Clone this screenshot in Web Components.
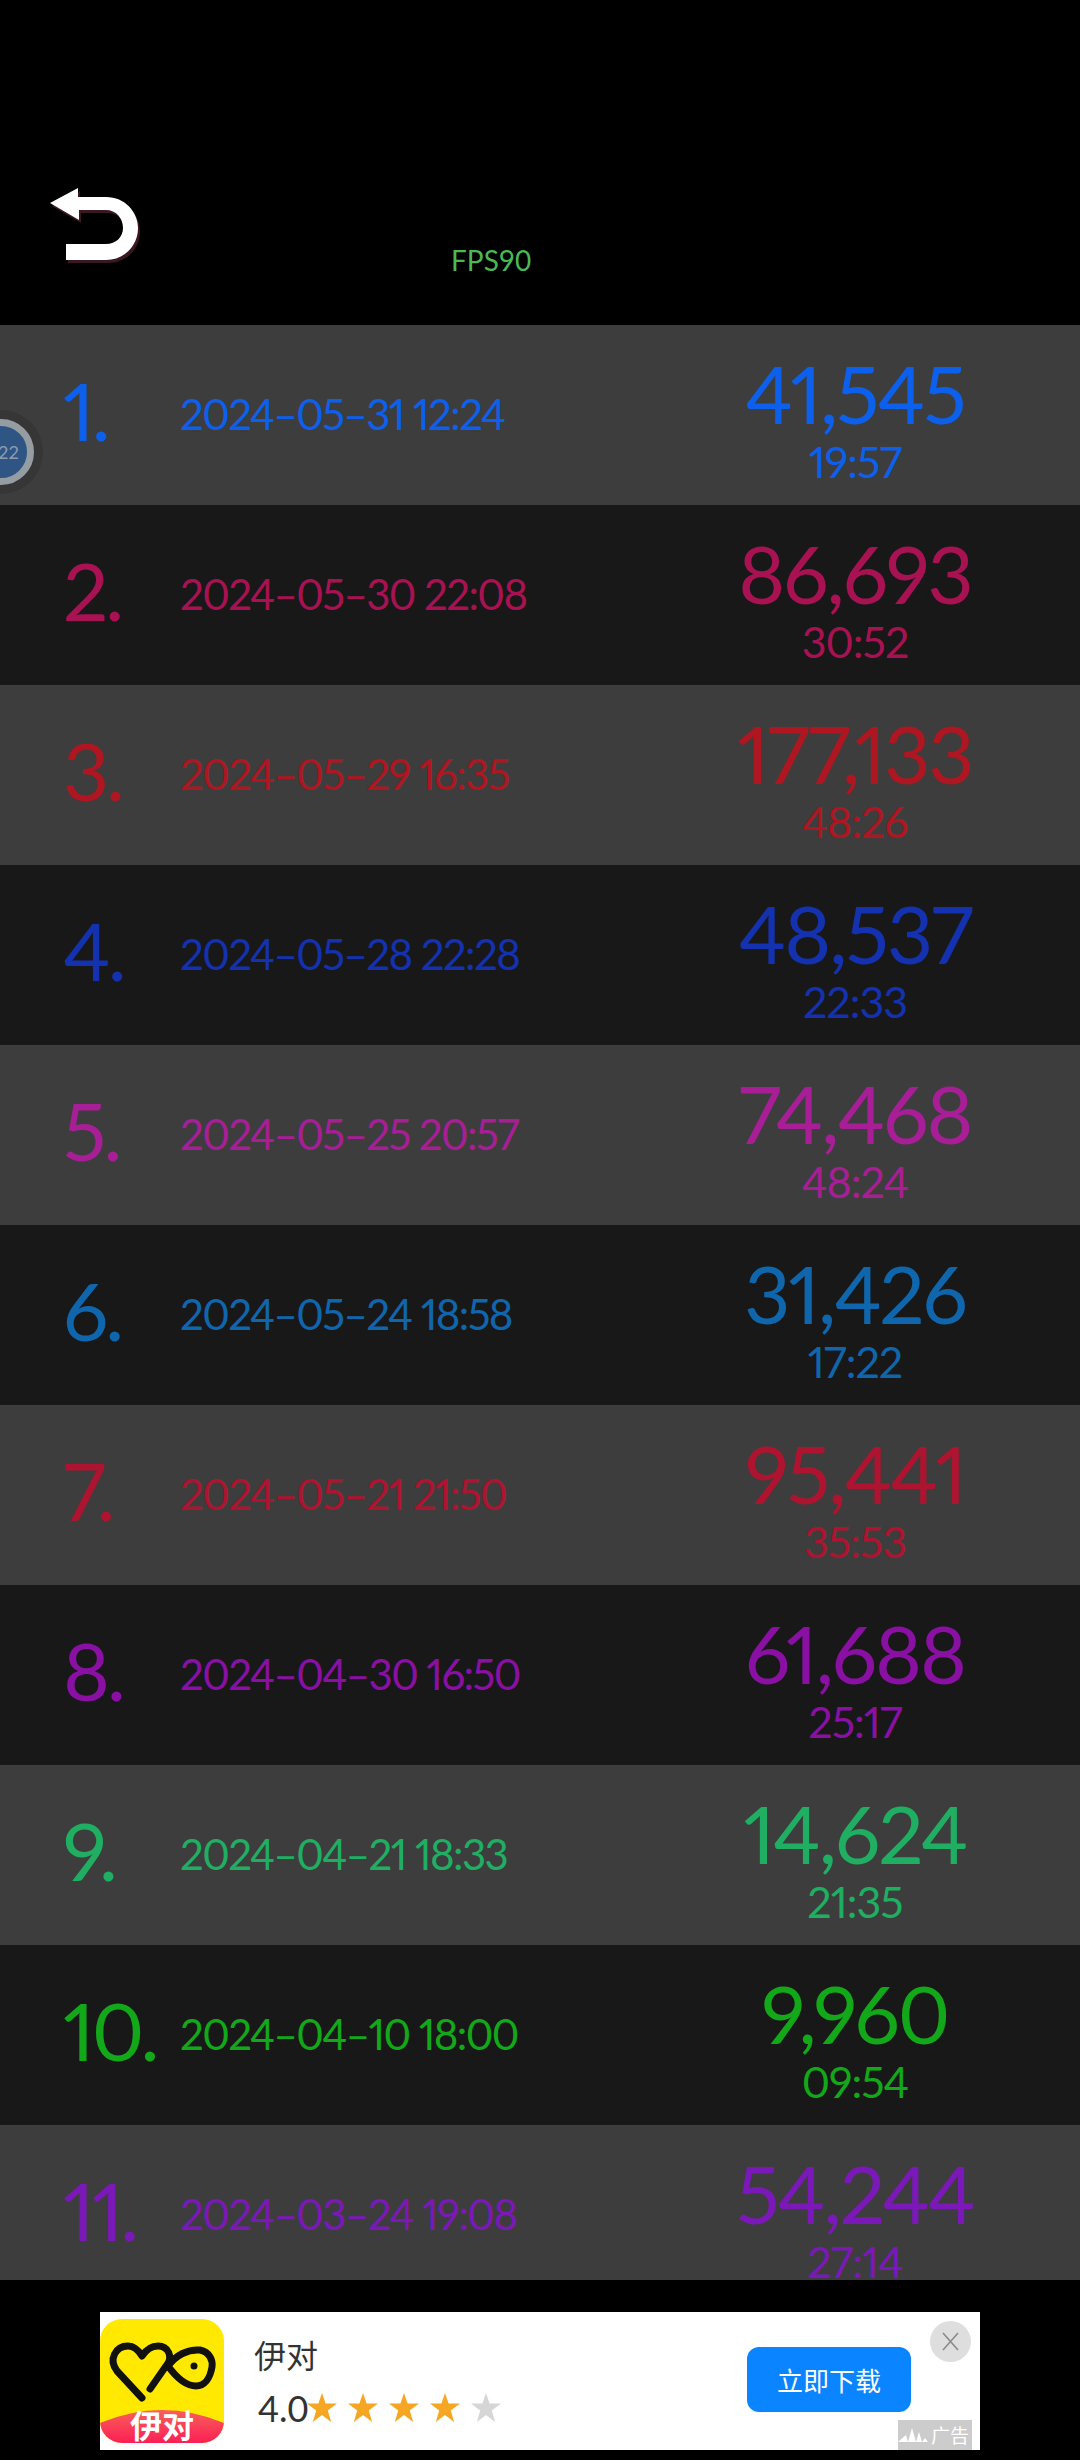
<!DOCTYPE html>
<html>
<head>
<meta charset="utf-8">
<style>
html, body { margin: 0; padding: 0; background: #000; }
body { width: 1080px; height: 2460px; overflow: hidden; font-family: "Lato", "Noto Sans CJK SC", sans-serif; }
</style>
</head>
<body>
<score-app>
  <top-bar slot="top"></top-bar>
  <score-row slot="list" rank="1." date="2024–05–31 12:24" score="41,545" time="19:57" color="#0c60ec" tone="light"></score-row>
  <score-row slot="list" rank="2." date="2024–05–30 22:08" score="86,693" time="30:52" color="#a81252" tone="dark"></score-row>
  <score-row slot="list" rank="3." date="2024–05–29 16:35" score="177,133" time="48:26" color="#ae1622" tone="light"></score-row>
  <score-row slot="list" rank="4." date="2024–05–28 22:28" score="48,537" time="22:33" color="#1432b0" tone="dark"></score-row>
  <score-row slot="list" rank="5." date="2024–05–25 20:57" score="74,468" time="48:24" color="#a81e96" tone="light"></score-row>
  <score-row slot="list" rank="6." date="2024–05–24 18:58" score="31,426" time="17:22" color="#1066ac" tone="dark"></score-row>
  <score-row slot="list" rank="7." date="2024–05–21 21:50" score="95,441" time="35:53" color="#ae1430" tone="light"></score-row>
  <score-row slot="list" rank="8." date="2024–04–30 16:50" score="61,688" time="25:17" color="#8a10a4" tone="dark"></score-row>
  <score-row slot="list" rank="9." date="2024–04–21 18:33" score="14,624" time="21:35" color="#1fae62" tone="light"></score-row>
  <score-row slot="list" rank="10." date="2024–04–10 18:00" score="9,960" time="09:54" color="#12a81a" tone="dark"></score-row>
  <score-row slot="list" rank="11." date="2024–03–24 19:08" score="54,244" time="27:14" color="#7a18b8" tone="light"></score-row>
  <float-ball slot="float"></float-ball>
  <ad-banner slot="ad"></ad-banner>
</score-app>

<script>
class ScoreApp extends HTMLElement {
  constructor() {
    super();
    this.attachShadow({ mode: "open" });
    this.shadowRoot.innerHTML = `
    <style>
      :host { display: flex; flex-direction: column; width: 1080px; height: 2460px; position: relative; background: #000; }
      .list { height: 1955px; overflow: hidden; display: flex; flex-direction: column; }
    </style>
    <slot name="top"></slot>
    <div class="list"><slot name="list"></slot></div>
    <slot name="float"></slot>
    <slot name="ad"></slot>`;
  }
}

class TopBar extends HTMLElement {
  constructor() {
    super();
    this.attachShadow({ mode: "open" });
    this.shadowRoot.innerHTML = `
    <style>
      :host { display: grid; grid-template-columns: 401px 1fr; height: 325px; box-sizing: border-box; padding: 186px 0 0 50px; color: #4cb854; }
      svg { display: block; }
      .fps { font-size: 28px; line-height: 28px; padding-top: 60px; }
    </style>
    <svg width="92" height="80" viewBox="0 0 92 80">
      <path d="M0 17 L28 2 V11 H56 C75 11 88 26 88 42 C88 60 74 74 56 74 H16 V58 H56 C66 58 73 51 73 42 C73 32 66 24 56 24 H29 V34 Z" fill="#3a1822" transform="translate(2 3)"/>
      <path d="M0 17 L28 2 V11 H56 C75 11 88 26 88 42 C88 60 74 74 56 74 H16 V58 H56 C66 58 73 51 73 42 C73 32 66 24 56 24 H29 V34 Z" fill="#fff"/>
    </svg>
    <div class="fps">FPS90</div>`;
  }
}

class ScoreRow extends HTMLElement {
  constructor() {
    super();
    this.attachShadow({ mode: "open" });
    const tone = this.getAttribute("tone") == "light" ? "#3d3d3d" : "#181818";
    this.shadowRoot.innerHTML = `
    <style>
      :host { display: grid; grid-template-columns: 117px 1fr 350px; flex: 0 0 180px; height: 180px; box-sizing: border-box; padding: 0 50px 0 63px; background: ${tone}; color: ${this.getAttribute("color")}; font-variant-numeric: proportional-nums; font-feature-settings: "pnum"; }
      .rank { font-size: 80px; line-height: 80px; padding-top: 45px; white-space: nowrap; letter-spacing: -3px; }
      .date { font-size: 42px; line-height: 50px; padding-top: 64px; white-space: nowrap; letter-spacing: -1.6px; }
      .res { display: flex; flex-direction: column; align-items: center; }
      .score { font-size: 80px; line-height: 68px; padding-top: 34px; letter-spacing: -2px; }
      .time { font-size: 43px; line-height: 44px; padding-top: 13px; letter-spacing: -1px; }
    </style>
    <div class="rank"></div>
    <div class="date"></div>
    <div class="res"><div class="score"></div><div class="time"></div></div>`;
    for (const k of ["rank", "date", "score", "time"]) {
      this.shadowRoot.querySelector("." + k).textContent = this.getAttribute(k);
    }
  }
}

class FloatBall extends HTMLElement {
  constructor() {
    super();
    this.attachShadow({ mode: "open" });
    this.shadowRoot.innerHTML = `
    <style>
      :host { display: block; position: absolute; left: -41px; top: 410px; width: 84px; height: 84px; box-sizing: border-box; border-radius: 50%; background: #363636; padding: 9px; }
      .in { width: 66px; height: 66px; box-sizing: border-box; border-radius: 50%; border: 7px solid #959da2; background: #2f5585; color: #8c9cae; font-size: 18px; line-height: 52px; text-align: right; padding-right: 8px; }
    </style>
    <div class="in">22</div>`;
  }
}

class StarRating extends HTMLElement {
  constructor() {
    super();
    this.attachShadow({ mode: "open" });
    const on = Number(this.getAttribute("on"));
    let stars = "";
    for (let i = 0; i < 5; i++) {
      stars += `<svg width="30" height="29" viewBox="0 0 30 29"><path d="M15 0 L18.6 10.6 H30 L20.8 17.5 L24.2 29 L15 22 L5.8 29 L9.2 17.5 L0 10.6 H11.4 Z" fill="${i < on ? "#f5a623" : "#d6d6d6"}"/></svg>`;
    }
    this.shadowRoot.innerHTML = `
    <style>
      :host { display: flex; gap: 11px; align-items: center; }
      svg { display: block; }
    </style>${stars}`;
  }
}

class AdBanner extends HTMLElement {
  constructor() {
    super();
    this.attachShadow({ mode: "open" });
    this.shadowRoot.innerHTML = `
    <style>
      :host { display: block; padding: 32px 100px 10px; }
      .box { position: relative; height: 138px; background: #fff; display: flex; align-items: center; font-family: "Noto Sans CJK SC", "Liberation Sans", sans-serif; }
      .logo { position: relative; flex: none; width: 124px; height: 124px; }
      .logo svg { display: block; }
      .logo span { position: absolute; left: 0; right: 0; bottom: 7px; height: 24px; line-height: 24px; text-align: center; font-size: 32px; font-weight: 700; color: #fff; }
      .info { margin-left: 30px; flex: 1; display: flex; flex-direction: column; gap: 12px; margin-top: -3px; }
      .name { font-size: 32px; line-height: 44px; color: #333; }
      .rate { display: flex; align-items: center; padding-left: 4px; }
      .val { font-family: "Lato", sans-serif; font-size: 36px; line-height: 40px; color: #333; width: 49px; }
      .btn { width: 164px; height: 65px; margin-right: 69px; margin-top: -4px; background: #0a84ff; border-radius: 12px; color: #fff; font-size: 26px; line-height: 65px; text-align: center; }
      .close { position: absolute; left: 830px; top: 9px; width: 41px; height: 41px; border-radius: 50%; background: #dedede; }
      .tag { position: absolute; right: 8px; bottom: 0; width: 74px; height: 30px; background: #ccc; color: #fff; font-size: 19px; line-height: 30px; display: flex; align-items: center; justify-content: flex-end; padding-right: 3px; box-sizing: border-box; gap: 3px; }
    </style>
    <div class="box">
      <div class="logo">
        <svg width="124" height="124" viewBox="0 0 124 124">
          <defs>
            <clipPath id="c"><rect width="124" height="124" rx="22"/></clipPath>
            <linearGradient id="g" x1="0" y1="0" x2="0" y2="1"><stop offset="0" stop-color="#f8605a"/><stop offset="1" stop-color="#fb1f55"/></linearGradient>
          </defs>
          <g clip-path="url(#c)">
            <rect width="124" height="124" fill="#ffe900"/>
            <path d="M0 104 Q62 78 124 104 V124 H0 Z" fill="url(#g)"/>
            <path d="M42 79 L17 52 C8 40 16 27 28 27 C35 27 39 32 42 37 C46 31 51 27 58 27 C68 27 74 38 66 47 L50 70" fill="none" stroke="#111" stroke-width="7" stroke-linejoin="round" stroke-linecap="round"/>
            <path d="M68 47 C76 36 88 30 100 31 C110 33 113 42 112 48 C110 60 104 67 96 67 C86 67 76 58 68 47 Z" fill="none" stroke="#111" stroke-width="7" stroke-linejoin="round"/>
            <circle cx="94" cy="47" r="3.5" fill="#111"/>
          </g>
        </svg>
        <span>伊对</span>
      </div>
      <div class="info">
        <div class="name">伊对</div>
        <div class="rate"><span class="val">4.0</span><star-rating on="4"></star-rating></div>
      </div>
      <div class="btn">立即下载</div>
      <div class="close">
        <svg width="41" height="41" viewBox="0 0 41 41"><path d="M13 12 L28 29 M28 12 L13 29" stroke="#8a8a8a" stroke-width="1.6" fill="none"/></svg>
      </div>
      <div class="tag">
        <svg width="30" height="16" viewBox="0 0 30 16"><path d="M0 15 L8 8 L10 15 Z M10 15 L14 1 L18 15 Z M18 15 L21 5 L24 15 Z M24 15 L27 11 L30 15 Z" fill="#fff"/></svg>
        <span>广告</span>
      </div>
    </div>`;
  }
}

customElements.define("star-rating", StarRating);
customElements.define("score-app", ScoreApp);
customElements.define("top-bar", TopBar);
customElements.define("score-row", ScoreRow);
customElements.define("float-ball", FloatBall);
customElements.define("ad-banner", AdBanner);
</script>
</body>
</html>
